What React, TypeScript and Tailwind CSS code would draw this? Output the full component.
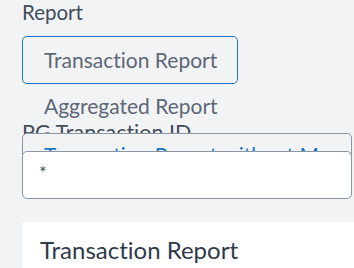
import React from 'react';

const font = { fontFamily: 'Lato, "Open Sans", sans-serif' };

const App: React.FC = () => {
  return (
    <div className="w-[354px] h-[268px] overflow-hidden bg-[#f2f3f5] pl-[22px] [font-variant-ligatures:none]" style={font}>
      {/* Report select */}
      <div className="h-[24px] leading-[24px] text-[20.5px] text-[#434d5a]">Report</div>
      <div className="mt-[12px] w-[216px] h-[48px] rounded-[5px] border border-[#1b76c4] flex items-center pl-[21px] text-[21px] text-[#5d6775]">
        Transaction Report
      </div>
      <div className="h-[36px] pl-[22px] pt-[10px] leading-[24px] text-[21px] text-[#5d6775] whitespace-nowrap">Aggregated Report</div>

      {/* PG Transaction ID */}
      <div className="h-[13px] leading-[24px] text-[21.5px] text-[#434d5a] overflow-visible whitespace-nowrap">PG Transaction ID</div>
      <div className="relative w-[330px]">
        <div className="h-[40px] rounded-t-[5px] border border-[#8a96a3] bg-[#f2f3f5] pl-[21px] pt-[9px] leading-[24px] text-[21px] text-[#1b76c4] whitespace-nowrap overflow-hidden">
          Transaction Report without M
        </div>
        <div className="relative z-10 -mt-[22px] h-[48px] rounded-[5px] border border-[#8a96a3] bg-white pl-[16px] pt-[8px] leading-[24px] text-[18px] text-[#434d5a]">
          *
        </div>
      </div>

      {/* Card */}
      <div className="mt-[23px] h-[60px] bg-white pl-[18px] pt-[14px] text-[24px] leading-[28px] text-[#2f3b4b] whitespace-nowrap">
        Transaction Report
      </div>
    </div>
  );
};

export default App;
